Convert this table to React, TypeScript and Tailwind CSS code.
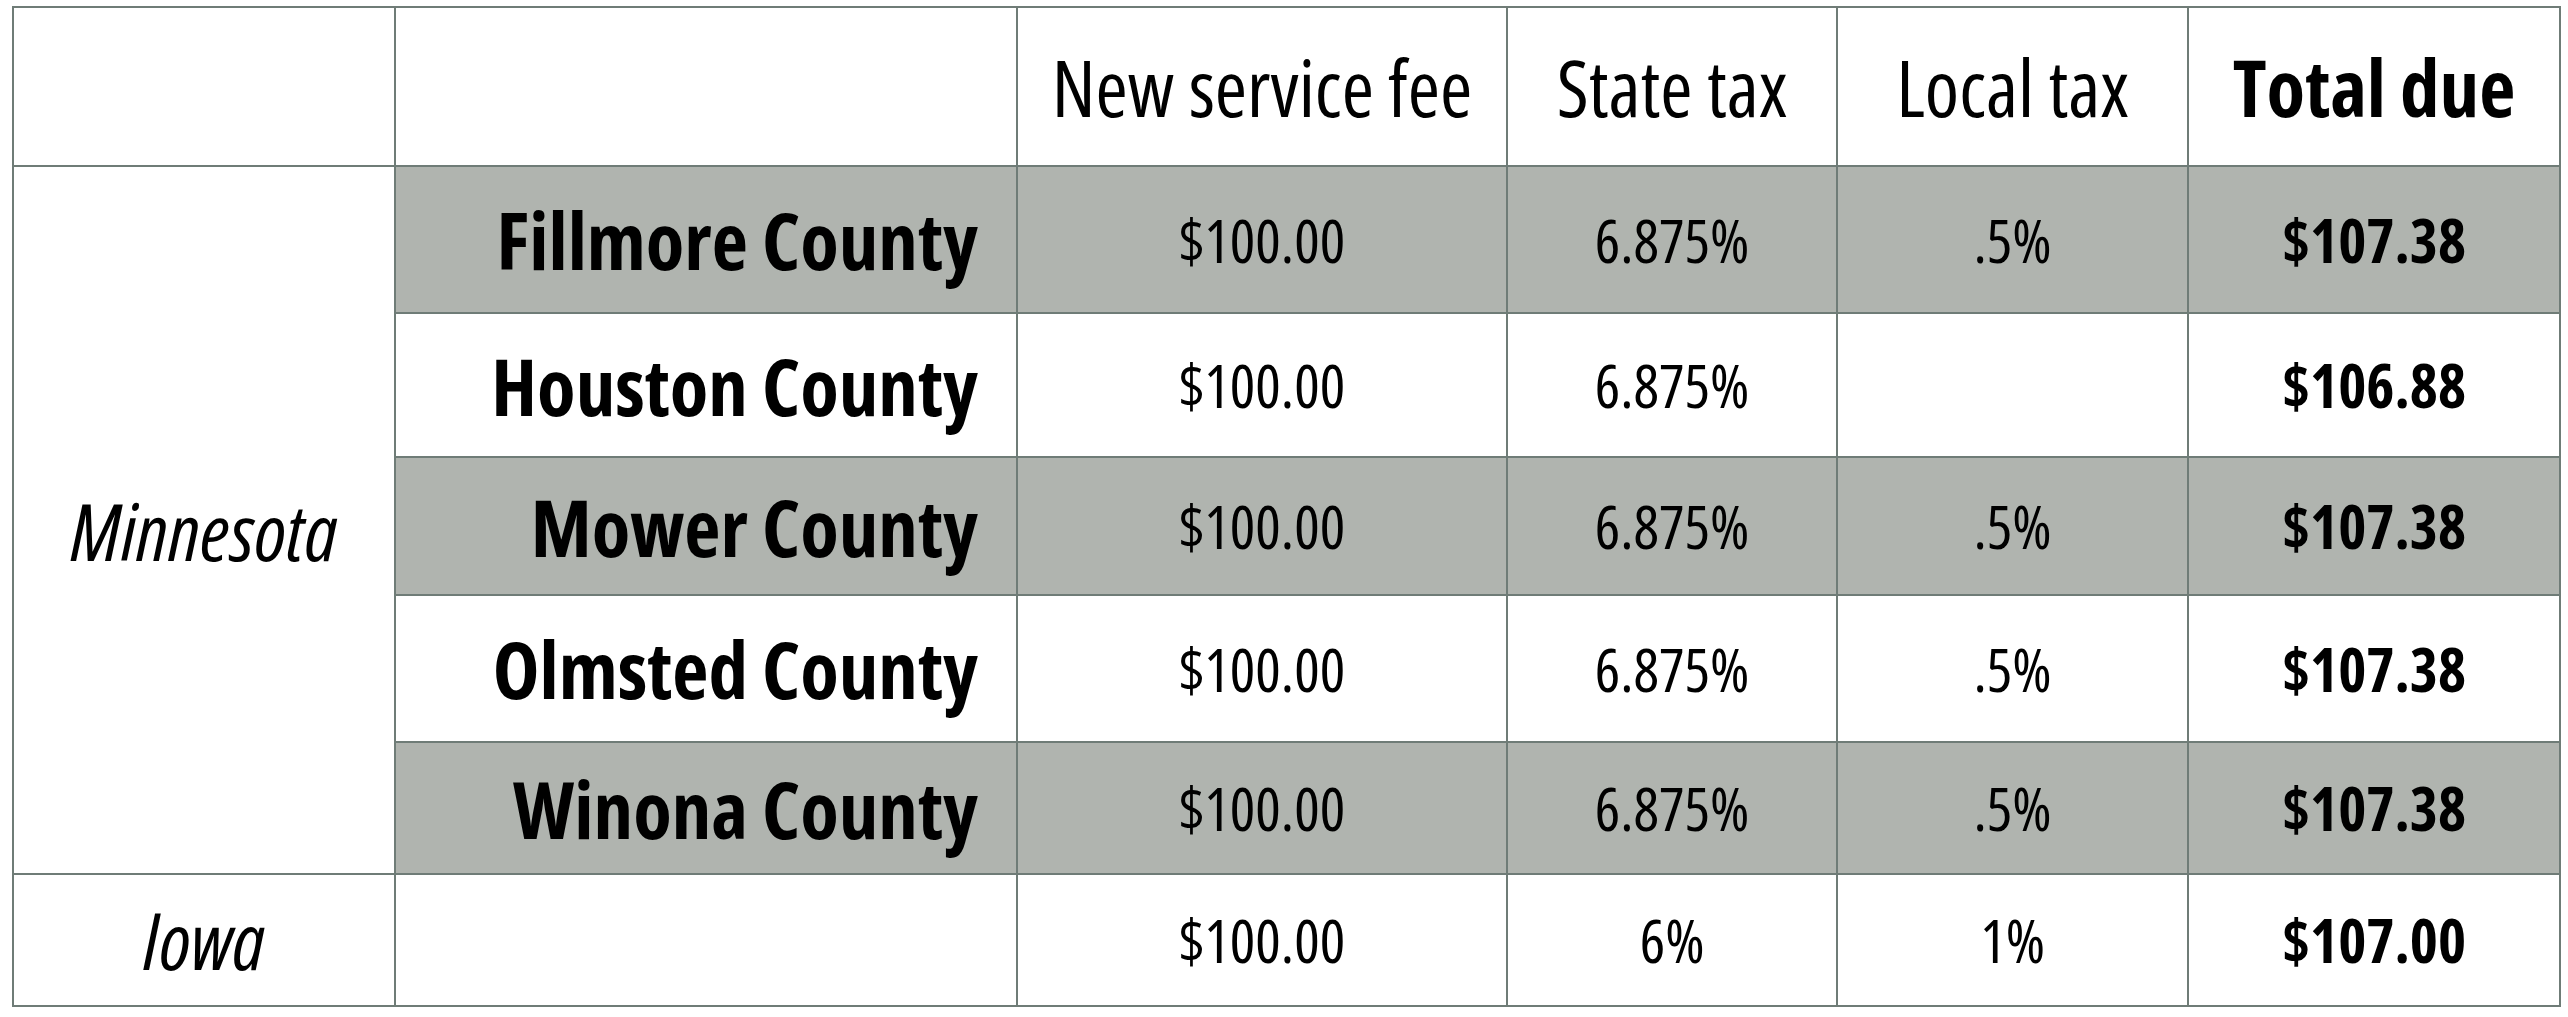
const rows = [
  { county: "Fillmore County", fee: "$100.00", state: "6.875%", local: ".5%", total: "$107.38", shade: true },
  { county: "Houston County", fee: "$100.00", state: "6.875%", local: "", total: "$106.88", shade: false },
  { county: "Mower County", fee: "$100.00", state: "6.875%", local: ".5%", total: "$107.38", shade: true },
  { county: "Olmsted County", fee: "$100.00", state: "6.875%", local: ".5%", total: "$107.38", shade: false },
  { county: "Winona County", fee: "$100.00", state: "6.875%", local: ".5%", total: "$107.38", shade: true },
];

const heights = ["h-[147px]", "h-[144px]", "h-[138px]", "h-[147px]", "h-[132px]"];

const cell = "border-2 border-[#6f7c77] text-center align-middle text-[60px] leading-none";

export default function App() {
  return (
    <div className="bg-white w-[2568px] h-[1017px] pl-[12px] pt-[6px] font-['Open_Sans',sans-serif] font-stretch-condensed text-black">
      <table className="border-collapse table-fixed w-[2547px]">
        <colgroup>
          <col className="w-[382px]" />
          <col className="w-[622px]" />
          <col className="w-[490px]" />
          <col className="w-[330px]" />
          <col className="w-[351px]" />
          <col className="w-[372px]" />
        </colgroup>
        <tbody>
          <tr className="h-[159px]">
            <td className={cell}></td>
            <td className={cell}></td>
            <td className={`${cell} text-[78px]`}>New service fee</td>
            <td className={`${cell} text-[78px]`}>State tax</td>
            <td className={`${cell} text-[78px]`}>Local tax</td>
            <td className={`${cell} text-[79px] font-bold`}>Total due</td>
          </tr>
          {rows.map((r, i) => (
            <tr key={r.county} className={`${heights[i]} ${r.shade ? "bg-[#b0b4af]" : "bg-white"}`}>
              {i === 0 ? (
                <td rowSpan={5} className={`${cell} bg-white italic text-[79px] pt-[20px]`}>
                  Minnesota
                </td>
              ) : null}
              <td className={`${cell} text-right pr-[38px] font-bold text-[79px]`}>{r.county}</td>
              <td className={cell}>{r.fee}</td>
              <td className={cell}>{r.state}</td>
              <td className={cell}>{r.local}</td>
              <td className={`${cell} font-bold`}>{r.total}</td>
            </tr>
          ))}
          <tr className="h-[132px]">
            <td className={`${cell} italic text-[78px]`}>Iowa</td>
            <td className={cell}></td>
            <td className={cell}>$100.00</td>
            <td className={cell}>6%</td>
            <td className={cell}>1%</td>
            <td className={`${cell} font-bold`}>$107.00</td>
          </tr>
        </tbody>
      </table>
    </div>
  );
}
